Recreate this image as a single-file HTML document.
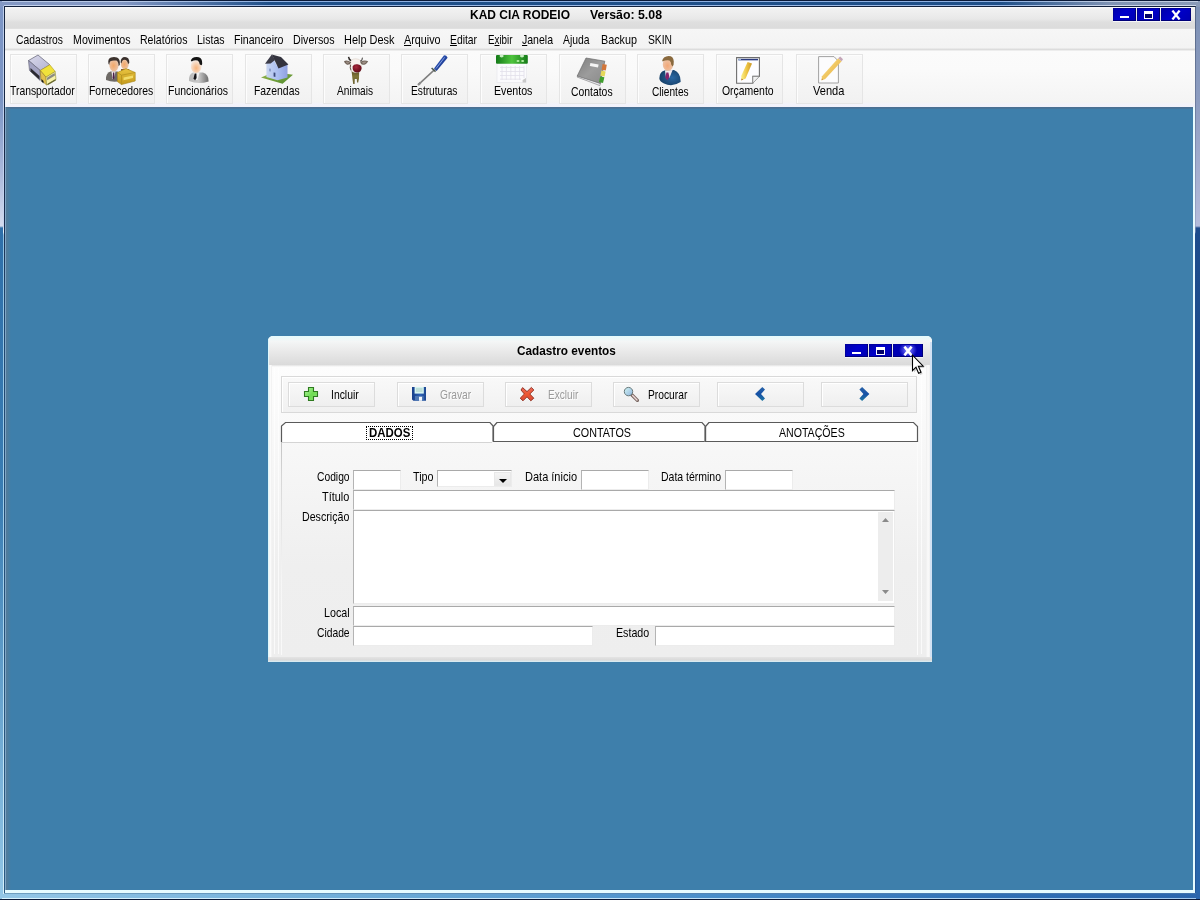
<!DOCTYPE html>
<html lang="pt">
<head>
<meta charset="utf-8">
<title>KAD CIA RODEIO</title>
<style>
html,body{margin:0;padding:0;}
body{width:1200px;height:900px;overflow:hidden;position:relative;background:#3e7fab;font-family:"Liberation Sans",sans-serif;font-size:13px;}
div,span,svg{position:absolute;box-sizing:border-box;}
#txt{left:0;top:0;width:1200px;height:900px;will-change:transform;}
.t{white-space:pre;line-height:16px;height:16px;transform-origin:0 50%;font-family:"Liberation Sans",sans-serif;}
.t u{text-decoration:underline;text-underline-offset:1px;}
/* main frame */
#frameTop{left:0;top:0;width:1200px;height:7px;}
#frameL{left:0;top:0;width:5px;height:900px;}
#frameR{left:1195px;top:0;width:5px;height:900px;}
#frameB{left:0;top:893px;width:1200px;height:7px;}
#titlebar{left:5px;top:7px;width:1190px;height:22px;background:linear-gradient(#fbfbfb 0,#f1f1f1 2px,#ececec 8px,#e8e8e8 12px,#dfdfdf 15px,#dcdcdc 21px,#e4e4e4 22px);}
#menubar{left:5px;top:29px;width:1190px;height:21px;background:linear-gradient(#f6f6f6 0,#f3f3f3 19px,#dedede 20px,#dadada 21px);}
#toolbar{left:5px;top:50px;width:1190px;height:57px;background:linear-gradient(#e6e6e6 0,#fbfbfb 1.5px,#fafafa 20px,#f4f4f4 52px,#f3f3fa 54px,#f1f1fb 57px);}
.tb{width:67px;height:50px;top:54px;border:1px solid #e5e5e5;background:linear-gradient(#f9f9f9,#f1f1f1);box-shadow:inset 1px 1px 0 #fdfdfd;}
.cb{top:8px;height:13px;background:linear-gradient(135deg,#0000a6 0%,#0000cc 45%,#0000b0 100%);box-shadow:inset -1px -1px 0 #000078,inset 1px 1px 0 #0000a0;}
/* mdi */
#mdi{left:5px;top:107px;width:1190px;height:786px;background:#3e7fab;}
/* dialog */
#dlg{left:268px;top:336px;width:664px;height:326px;border-radius:5px 5px 0 0;background:#f0f0f0;overflow:hidden;}
#dlgTitle{left:0;top:0;width:664px;height:29px;background:linear-gradient(#e4fbfd 0%,#f4f6f6 18%,#ececec 45%,#e2e2e2 75%,#dadada 100%);}
.btn{top:382px;width:87px;height:25px;border:1px solid #dcdcdc;background:linear-gradient(#f8f8f8,#efefef);box-shadow:inset 1px 1px 0 #fff;}
.inp{background:#fff;border-top:1px solid #a9a9a9;border-left:1px solid #b4b4b4;border-right:1px solid #ececec;border-bottom:1px solid #ececec;}
</style>
</head>
<body>
<!-- MDI client -->
<div id="mdi"></div>
<div style="left:5px;top:107px;width:1188px;height:2px;background:linear-gradient(#4c6e90,#44769e);"></div>
<div style="left:6px;top:108px;width:5px;height:782px;background:linear-gradient(90deg,rgba(86,122,150,.9),rgba(62,127,171,0));"></div>

<!-- main window chrome -->
<div id="titlebar"></div>
<div id="menubar"></div>
<div id="toolbar"></div>

<!-- title + menu text -->

















<!-- main window control buttons -->
<div class="cb" style="left:1113px;width:23px;"><div style="left:7px;top:8px;width:9px;height:2px;background:#fff;"></div></div>
<div class="cb" style="left:1137px;width:23px;"><div style="left:7px;top:3px;width:9px;height:8px;border:1px solid #fff;border-top-width:3px;background:#00006a;"></div></div>
<div class="cb" style="left:1161px;width:30px;"><svg width="10" height="10" viewBox="0 0 10 10" style="left:10px;top:1.5px;"><path d="M1.4 0.6 L8.6 9.4 M8.6 0.6 L1.4 9.4" stroke="#fff" stroke-width="2.3"/></svg></div>
<div style="left:1113px;top:21px;width:78px;height:1px;background:#fbfbff;opacity:.8;"></div>
<!-- main toolbar buttons -->
<div class="tb" style="left:10px;"></div><svg width="32" height="34" viewBox="26 53 32 34" style="left:26px;top:53px;">
<defs><linearGradient id="trA" x1="0" y1="0" x2="1" y2="1"><stop offset="0" stop-color="#d9d9ea"/><stop offset="1" stop-color="#b4b4d4"/></linearGradient></defs>
<path d="M28.5 60.5 L38 55 L49.8 64.8 L40.2 70.5 Z" fill="url(#trA)" stroke="#6f6f80" stroke-width=".8"/>
<path d="M28.5 60.5 L40.2 70.5 L40.2 80.5 L29.5 70.5 Z" fill="#a3a3c2" stroke="#6a6a7c" stroke-width=".7"/>
<path d="M30.5 71.5 L39.5 79.8 L39.5 76 L30.5 68 Z" fill="#2a2a30"/>
<path d="M40.2 70.5 L49.8 64.8 L55.2 71.5 L46 77.2 Z" fill="#f0e23a" stroke="#b09a20" stroke-width=".6"/>
<path d="M40.2 70.5 L46 77.2 L46.6 85 L41 80 Z" fill="#e2c14e" stroke="#8f7a20" stroke-width=".6"/>
<path d="M46 77.2 L55.2 71.5 L56 79.5 L46.6 85 Z" fill="#f6f1a8" stroke="#8f8a30" stroke-width=".6"/>
<path d="M47 77.8 L54.6 73 L55 75.6 L47.2 80.3 Z" fill="#8b8b84"/>
<path d="M41.5 79 L43.5 81 L43.5 83.4 L41.5 81.5 Z" fill="#1a1a1a"/>
<path d="M47.5 83.8 L55.6 79 L55.8 80.6 L47.6 85.2 Z" fill="#6a6a30"/>
</svg>

<div class="tb" style="left:88px;"></div><svg width="33" height="32" viewBox="104 55 33 32" style="left:104px;top:55px;">
<defs><radialGradient id="fcA" cx=".45" cy=".55" r=".6"><stop offset="0" stop-color="#f3a868"/><stop offset="1" stop-color="#e9c9b4"/></radialGradient>
<linearGradient id="fcB" x1="0" y1="0" x2="0" y2="1"><stop offset="0" stop-color="#e9c440"/><stop offset="1" stop-color="#c49a1c"/></linearGradient></defs>
<ellipse cx="124.8" cy="64" rx="4" ry="5.4" fill="url(#fcA)"/>
<path d="M120.6 62.5 Q120.6 57 125 57 Q129.6 57 129.3 63 L128 64 Q127.6 60 124.5 59.8 Q121.8 60 121.5 63.5 Z" fill="#3a302c"/>
<path d="M121 69 L129 69 L131 74 L121 74 Z" fill="#8a5a30"/>
<path d="M106 80 Q105.5 73 110.5 71.5 L117.5 71.5 Q121 73 120.5 81 Q113 83 106 80 Z" fill="#6e6a66"/>
<path d="M111.5 71.5 L115.5 71.5 L114 79 L112.6 79 Z" fill="#f4eeee"/>
<path d="M113 72.5 L114.3 72.5 L114.6 78 L113.4 79.5 L112.6 78 Z" fill="#4a1f4a"/>
<ellipse cx="114" cy="65" rx="4.7" ry="6.4" fill="url(#fcA)"/>
<path d="M108.4 63.5 Q107.6 58.6 111 57.6 Q114 56.4 117 57.6 Q120.4 59 119.8 65 L118.6 66 Q118.6 61.8 116.4 60.6 Q112.5 60 110.4 61.2 Q109.4 62.2 109.2 65 Z" fill="#3c322e"/>
<path d="M117.4 72.5 L126 68.6 L135.2 72.5 L135.2 81 L121.5 84.6 L117.4 81.6 Z" fill="url(#fcB)" stroke="#a58418" stroke-width=".6"/>
<path d="M117.4 72.5 L121.5 75.2 L135.2 72.5 M121.5 75.2 L121.5 84.6" fill="none" stroke="#b08e1c" stroke-width=".7"/>
<path d="M123.5 77.6 L133 75.6 L133 78 L123.5 80.2 Z" fill="#f2dc6a"/>
</svg>

<div class="tb" style="left:166px;"></div><svg width="24" height="30" viewBox="187 55 24 30" style="left:187px;top:55px;">
<defs><radialGradient id="fuA" cx=".5" cy=".65" r=".6"><stop offset="0" stop-color="#f8b47c"/><stop offset=".8" stop-color="#f5e1d2"/><stop offset="1" stop-color="#f4f0ec"/></radialGradient>
<linearGradient id="fuB" x1="0" y1="0" x2="1" y2="0"><stop offset="0" stop-color="#b9b9b9"/><stop offset=".5" stop-color="#c9c9c9"/><stop offset="1" stop-color="#6c6c6c"/></linearGradient></defs>
<path d="M189 81 Q188.5 74.5 193 72.6 L203 72.6 Q208.8 74.5 208.6 81.5 Q198 84.8 189 81 Z" fill="url(#fuB)"/>
<path d="M193.6 72.6 L199.5 72.6 L197.5 80 L194.6 80 Z" fill="#f2f2f2"/>
<path d="M194.6 73.6 L196.4 73.6 L196.6 78 L195 80.6 L193.6 78.2 Z" fill="#16161a"/>
<ellipse cx="196.2" cy="66" rx="5.4" ry="7" fill="url(#fuA)"/>
<path d="M190.8 60.6 Q191.6 57.4 196.5 57 Q201.2 56.8 202 61 Q202.6 64.4 201.6 65.2 L199.8 64.4 Q199.4 61.4 197.6 60.4 Q194.6 59.6 191.6 61.4 Z" fill="#151515"/>
</svg>

<div class="tb" style="left:245px;"></div><svg width="36" height="33" viewBox="259 53 36 33" style="left:259px;top:53px;">
<defs><linearGradient id="hzA" x1="0" y1="0" x2="1" y2="0"><stop offset="0" stop-color="#c9d6f2"/><stop offset=".55" stop-color="#a9bdf0"/><stop offset="1" stop-color="#8fa0e0"/></linearGradient>
<linearGradient id="hzB" x1="0" y1="0" x2="1" y2="1"><stop offset="0" stop-color="#9ab84e"/><stop offset="1" stop-color="#4f8a2c"/></linearGradient></defs>
<path d="M261 77.6 L274 72 L293 74.8 L282.6 83.8 Z" fill="url(#hzB)"/>
<path d="M266.4 62.5 L272 56 L277 66 L287.5 63.5 L287.5 77.5 L277.5 80.2 L266.4 77 Z" fill="url(#hzA)"/>
<path d="M265 63.8 L271.8 54.4 L275 60 L270.6 63.5 Z" fill="#3c3c48"/>
<path d="M271.8 54.4 L281 57 L288.4 64.6 L278.5 68.6 Z" fill="#33333e"/>
<path d="M273.6 72.5 L275.4 72.8 L275.4 77 L273.6 76.6 Z" fill="#3c4a7a"/>
<path d="M269 68.5 L271 68.8 L271 71.6 L269 71.3 Z" fill="#8ea0cc"/>
</svg>

<div class="tb" style="left:323px;"></div><svg width="28" height="30" viewBox="342 55 28 30" style="left:342px;top:55px;">
<defs><radialGradient id="cwA" cx=".4" cy=".35" r=".7"><stop offset="0" stop-color="#a8283a"/><stop offset=".6" stop-color="#7a1222"/><stop offset="1" stop-color="#5a0c18"/></radialGradient>
<linearGradient id="cwB" x1="0" y1="0" x2="0" y2="1"><stop offset="0" stop-color="#5e5228"/><stop offset=".4" stop-color="#7e7436"/><stop offset="1" stop-color="#6a6030"/></linearGradient></defs>
<path d="M351.6 71 L359.2 71 L359 78.6 L358.2 82.6 L357 82.6 L356.8 79 L354.8 79 L354.6 84 L353.2 84 L352.4 78.6 Z" fill="url(#cwB)"/>
<path d="M350 63 Q350.4 59 355.6 58.8 Q361 59 361.6 63 L361.6 69 Q360.4 72.6 356 72.6 Q351 72.4 350 68.6 Z" fill="#f7f1ec" stroke="#dcd2ca" stroke-width=".6"/>
<path d="M344 61.2 Q347 59.6 351.2 62.2 Q350 65.2 347 64.8 Q344.6 63.8 344 61.2 Z" fill="#6e6056"/>
<path d="M345.6 61.8 Q347.6 61.2 349.8 62.6 Q348.4 64 346.8 63.6 Z" fill="#9a8c82"/>
<path d="M360.2 62 Q364 59.6 368.2 61.2 Q366.2 65 362.6 64.8 Q360.6 64 360.2 62 Z" fill="#74685e"/>
<path d="M362 62.4 Q364.4 61 366.6 61.8 Q365.2 63.8 363 63.8 Z" fill="#a09288"/>
<path d="M347.8 57 Q348.2 60.2 350.6 61.2 L351.4 60 Q349.8 59 349.2 56.8 Z" fill="#2e2a28"/>
<path d="M362 57.6 Q362 60 360 60.8 L360.6 61.8 Q363 60.8 362.8 57.8 Z" fill="#2e2a28"/>
<path d="M352.6 66.4 Q353.6 63.8 357.4 64.2 Q361.6 64.8 361.6 68.2 Q361.2 72.4 356.8 72.4 Q352.2 72 352.6 66.4 Z" fill="url(#cwA)"/>
<path d="M350.6 64.6 Q349.8 67.6 351 70.4" stroke="#6a5a50" stroke-width="1" fill="none"/>
</svg>

<div class="tb" style="left:401px;"></div><svg width="34" height="34" viewBox="416 53 34 34" style="left:416px;top:53px;">
<defs><linearGradient id="sdA" x1="0" y1="0" x2="1" y2="1"><stop offset="0" stop-color="#6f92dc"/><stop offset=".45" stop-color="#2448a6"/><stop offset="1" stop-color="#16286e"/></linearGradient></defs>
<path d="M418.4 84.6 L434.6 69.6" stroke="#7e7e7e" stroke-width="1.5"/>
<path d="M418 85 L420.6 82.6" stroke="#8e8e8e" stroke-width="2.2"/>
<path d="M431.6 68 L435.6 71.6" stroke="#4a5850" stroke-width="1.6"/>
<path d="M434 68.6 L443.8 55.4 Q446.4 55 447.6 57.8 L436.6 71 Z" fill="url(#sdA)"/>
<path d="M436 68.6 L444.6 57.4" stroke="#9db6ee" stroke-width=".8"/>
</svg>

<div class="tb" style="left:480px;"></div><svg width="34" height="32" viewBox="495 53 34 32" style="left:495px;top:53px;">
<defs><linearGradient id="clA" x1="0" y1="0" x2="1" y2="0"><stop offset="0" stop-color="#147a18"/><stop offset=".5" stop-color="#4fc43e"/><stop offset="1" stop-color="#157a18"/></linearGradient></defs>
<rect x="497" y="63" width="29.6" height="19.6" fill="#fbfbfd" stroke="#e4e4ea" stroke-width=".6"/>
<path d="M500 67.5 H524 M500 71.5 H524 M500 75.5 H524 M500 79.2 H521 M502 66 V80 M506.4 66 V80 M510.8 66 V80 M515.2 66 V80 M519.6 66 V80 M524 66 V78" stroke="#e2e0ea" stroke-width=".8" fill="none"/>
<rect x="496" y="55" width="31.8" height="8.8" rx="1" fill="url(#clA)"/>
<ellipse cx="501.6" cy="56" rx="2" ry="1.4" fill="#c9efc4"/>
<ellipse cx="522" cy="56" rx="2" ry="1.4" fill="#c9efc4"/>
<ellipse cx="518" cy="61" rx="1.5" ry="1.1" fill="#b4f0a4"/>
<ellipse cx="522.6" cy="61" rx="1.5" ry="1.1" fill="#b4f0a4"/>
<path d="M522.6 80 L526 78 L526 82.6 L522.6 82.6 Z" fill="#c9c9c9"/>
</svg>

<div class="tb" style="left:559px;"></div><svg width="34" height="31" viewBox="575 56 34 31" style="left:575px;top:56px;">
<defs><linearGradient id="bkA" x1="0" y1="0" x2="1" y2="1"><stop offset="0" stop-color="#7e7e7e"/><stop offset=".5" stop-color="#9c9c9c"/><stop offset="1" stop-color="#8a8a8a"/></linearGradient></defs>
<path d="M577 77 L599.8 85.6 L601.4 81 L578.6 74.5 Z" fill="#e9e9ee" stroke="#777" stroke-width=".6"/>
<path d="M586 58 L604.8 61.2 L600.2 83.4 L577.2 76 Z" fill="url(#bkA)" stroke="#6a6a6a" stroke-width=".7"/>
<path d="M590.4 63 L598.6 64.6 L598 67.6 L589.8 66 Z" fill="#f4f4f4"/>
<path d="M602.6 64 L606.8 64.8 L605.8 70.6 L601.6 69.8 Z" fill="#d2763a"/>
<path d="M601.4 70.6 L605.6 71.4 L604.6 76.6 L600.4 75.8 Z" fill="#e4d85a"/>
<path d="M600.2 76.4 L604.4 77.2 L603 83 L599 82 Z" fill="#3f9e2e"/>
</svg>

<div class="tb" style="left:637px;"></div><svg width="26" height="33" viewBox="657 54 26 33" style="left:657px;top:54px;">
<defs><radialGradient id="cliA" cx=".45" cy=".6" r=".6"><stop offset="0" stop-color="#f2a878"/><stop offset="1" stop-color="#edc8ae"/></radialGradient>
<radialGradient id="cliB" cx=".6" cy=".5" r=".7"><stop offset="0" stop-color="#2a68a4"/><stop offset="1" stop-color="#143a5e"/></radialGradient></defs>
<path d="M659.4 79 Q659 72 664.4 70.4 L674 70 Q681 73 680.6 82 Q672 87.6 664 83.4 Q660 81.6 659.4 79 Z" fill="url(#cliB)"/>
<path d="M665 70.4 L672.6 70 L669.6 77.4 L666 78.4 Z" fill="#f1eaf0"/>
<path d="M666.4 72.6 L668.4 72.4 L669.4 77 L667.4 80.6 L665.2 77.6 Z" fill="#86246a"/>
<ellipse cx="668" cy="64.4" rx="5.2" ry="6.4" fill="url(#cliA)"/>
<path d="M662.2 60.6 Q663.4 56.4 668.6 56 Q673.4 56 673.8 61.4 Q674 65.4 672.4 66.6 L671.2 64.6 Q671.4 61.6 669.4 60.4 Q665.6 59.8 662.6 61.6 Z" fill="#8a6a3e"/>
</svg>

<div class="tb" style="left:716px;"></div><svg width="28" height="31" viewBox="734 55 28 31" style="left:734px;top:55px;">
<defs><linearGradient id="orA" x1="0" y1="0" x2="1" y2="0"><stop offset="0" stop-color="#fbf08a"/><stop offset=".5" stop-color="#eec544"/><stop offset="1" stop-color="#c99628"/></linearGradient></defs>
<path d="M736.6 57.6 L759.4 57.6 L759.4 76.4 L752.8 76.4 L752.8 83.2 L736.6 83.2 Z" fill="#fdfdff" stroke="#6e6e6e" stroke-width="1.1"/>
<path d="M752.8 76.4 L759.4 76.4 L752.8 83.2 Z" fill="#f1f1f1" stroke="#8a8a8a" stroke-width=".8"/>
<path d="M738.4 59.6 H758" stroke="#2c3c80" stroke-width="1.5"/>
<path d="M738.4 59.6 H741" stroke="#9ab4d8" stroke-width="1.5"/>
<path d="M747.6 62 L752 63.6 L745.6 78.4 L741.4 80.6 L741.2 76 Z" fill="url(#orA)"/>
<path d="M741.4 80.6 L741.5 78.6 L743 79.6 Z" fill="#a05a28"/>
</svg>

<div class="tb" style="left:796px;"></div><svg width="28" height="32" viewBox="816 54 28 32" style="left:816px;top:54px;">
<defs><linearGradient id="vdA" x1="0" y1="0" x2="1" y2="1"><stop offset="0" stop-color="#fbe9a0"/><stop offset=".5" stop-color="#f0c660"/><stop offset="1" stop-color="#e7ae52"/></linearGradient></defs>
<path d="M818.6 56.6 L834 56.6 L838.4 61.2 L838.4 83 L818.6 83 Z" fill="#fcfcfd" stroke="#a2a2a2" stroke-width="1"/>
<path d="M838.2 58.2 L841.6 61.2 L825.2 79 L821.4 80.4 L822 76.2 Z" fill="url(#vdA)"/>
<path d="M838.2 58.2 L840.2 56.4 L843 59.2 L841.6 61.2 Z" fill="#c4a6b8"/>
<path d="M821.6 80 L822 78.4 L823 79.4 Z" fill="#b07a4a"/>
</svg>


<!-- window frame (aero glass) -->
<div id="frameL" style="background:linear-gradient(180deg,#7d96c6 0px,#7a94c4 100px,#a9b7da 170px,#d4dbee 226px,#2f6fa9 228px,#3a7db3 500px,#7fb6db 800px,#93c6e6 900px);"></div>
<div id="frameR" style="background:linear-gradient(180deg,#7c90b4 0px,#8c9cc0 100px,#b3bcdb 226px,#1d4c8c 228px,#1f5596 600px,#2a68ad 900px);"></div>
<div id="frameTop" style="background:linear-gradient(90deg,#8398c4 0px,#8398c4 120px,#1f4f88 270px,#1f4f88 1000px,#7f93b4 1110px,#8a9bb8 1200px);"></div>
<div id="frameB" style="background:linear-gradient(90deg,#93c6e6 0px,#6aa9d6 400px,#4a8fca 700px,#2f6fb5 1000px,#2a66ad 1200px);"></div>
<!-- frame lines: top -->
<div style="left:0;top:0;width:1200px;height:1px;background:#0b1a38;"></div>
<div style="left:2px;top:1px;width:1196px;height:1px;background:linear-gradient(90deg,#b9c9e6 0,#b9c9e6 120px,#8fb0e0 270px,#8fb0e0 1000px,#c0cce0 1110px);"></div>
<div style="left:4px;top:5px;width:1192px;height:1px;background:linear-gradient(90deg,#c4d3ee 0,#c4d3ee 120px,#9ab8e5 270px,#9ab8e5 1000px,#cdd7ea 1110px);"></div>
<div style="left:4px;top:6px;width:1192px;height:1px;background:#12213d;"></div>
<!-- left -->
<div style="left:3px;top:6px;width:1px;height:888px;background:linear-gradient(180deg,#bccdea 0,#c6d4ee 220px,#e8f4fb 226px,#8fc0e0 229px,#a6d2ec 600px,#d9f1fb 900px);"></div>
<div style="left:4px;top:6px;width:1px;height:888px;background:linear-gradient(180deg,#14233f 0,#1b2e4f 220px,#1f456e 300px,#2a5a82 900px);"></div>
<div style="left:5px;top:107px;width:1px;height:783px;background:#7fa6c6;"></div>
<!-- right -->
<div style="left:1192.5px;top:107px;width:2.5px;height:786px;background:#e6fbff;"></div>
<div style="left:1195px;top:6px;width:1px;height:888px;background:linear-gradient(180deg,#3b4a66 0,#59688a 100px,#8e9bbd 226px,#1d4c8c 228px);opacity:.6;"></div>
<!-- bottom -->
<div style="left:5px;top:890px;width:1190px;height:3px;background:#e6fbff;"></div>
<div style="left:4px;top:893px;width:1192px;height:1px;background:linear-gradient(90deg,#6f9fc0,#3f74ae);"></div>
<div style="left:2px;top:898px;width:1194px;height:1px;background:linear-gradient(90deg,#d9f4ff,#bfe0f6 800px,#9fc8ee);"></div>
<div style="left:0;top:899px;width:1200px;height:1px;background:#0b1a38;"></div>

<!-- child dialog: Cadastro eventos -->
<div id="dlg">
  <div id="dlgTitle"></div>
  <!-- borders -->
  <div style="left:0;top:0;width:1px;height:326px;background:#dff8fc;"></div>
  <div style="left:1px;top:29px;width:3px;height:293px;background:linear-gradient(90deg,#f1f3f3,#fbfbfb,#efefef);"></div>
  <div style="left:658px;top:29px;width:4px;height:292px;background:linear-gradient(90deg,#efefef,#fbfbfb,#f1f1f1);"></div>
  <div style="left:662px;top:6px;width:2px;height:320px;background:#d2e2f4;"></div>
  <!-- client -->
  <div style="left:4px;top:29px;width:654px;height:292px;background:linear-gradient(#e2e2e2 0,#fdfdfd 2px,#f9f9f9 60px,#f4f4f4 130px,#efefef 200px,#eeeeee 100%);"></div>
  <div style="left:6px;top:32px;width:1px;height:286px;background:#fff;opacity:.7;"></div>
  <div style="left:10px;top:32px;width:1px;height:286px;background:#fff;opacity:.7;"></div>
  <div style="left:653px;top:32px;width:1px;height:286px;background:#fff;opacity:.7;"></div>
  <div style="left:0;top:321px;width:664px;height:5px;background:linear-gradient(#e4e4e4 0,#d9d9d9 60%,#d8f0f8 100%);"></div>
</div>
<!-- dialog toolbar panel -->
<div style="left:281px;top:376px;width:636px;height:37px;border:1px solid #d9d9d9;background:linear-gradient(#f9f9f9,#f1f1f1);box-shadow:inset 1px 1px 0 #fff;"></div>
<div class="btn" style="left:288px;"></div>
<div class="btn" style="left:397px;"></div>
<div class="btn" style="left:505px;"></div>
<div class="btn" style="left:613px;"></div>
<div class="btn" style="left:717px;"></div>
<div class="btn" style="left:821px;"></div>
<svg width="16" height="16" viewBox="303 386 16 16" style="left:303px;top:386px;">
<defs><linearGradient id="plA" x1="0" y1="0" x2="1" y2="1"><stop offset="0" stop-color="#b2f5a2"/><stop offset=".55" stop-color="#6fdc52"/><stop offset="1" stop-color="#8ee07a"/></linearGradient></defs>
<path d="M308.5 387.5 H313.5 V391.5 H317.5 V396.5 H313.5 V400.5 H308.5 V396.5 H304.5 V391.5 H308.5 Z" fill="url(#plA)" stroke="#2f7a20" stroke-width="1.1"/></svg><svg width="16" height="16" viewBox="411 386 16 16" style="left:411px;top:386px;">
<defs><linearGradient id="flA" x1="0" y1="0" x2="1" y2="0"><stop offset="0" stop-color="#173f8a"/><stop offset=".6" stop-color="#2f62b6"/><stop offset="1" stop-color="#1c468f"/></linearGradient></defs>
<path d="M412 387 H426 V400.8 H413.4 L412 399.6 Z" fill="url(#flA)"/>
<rect x="414.6" y="387" width="9.2" height="6.6" fill="#d6f4f0"/>
<path d="M416 389 H422.6 M416 391 H422.6" stroke="#8fb6b0" stroke-width=".7"/>
<rect x="415" y="396" width="8.6" height="4.8" fill="#4f78b4"/>
<rect x="419" y="396.8" width="3" height="4" fill="#f2f6fc"/></svg><svg width="16" height="16" viewBox="519 386 16 16" style="left:519px;top:386px;">
<defs><linearGradient id="rxA" x1="0" y1="0" x2="0" y2="1"><stop offset="0" stop-color="#e86a60"/><stop offset=".5" stop-color="#ee5630"/><stop offset="1" stop-color="#d64a3a"/></linearGradient></defs>
<path d="M522.6 387.6 L527 391.6 L531.4 387.4 L533.8 390 L529.8 394 L533.8 398.2 L530.8 400.8 L527 396.8 L523 400.8 L520.2 398.2 L524.4 394 L521 390 Z" fill="url(#rxA)" stroke="#8e2c1c" stroke-width=".9" stroke-linejoin="round"/></svg><svg width="16" height="16" viewBox="623 386 16 16" style="left:623px;top:386px;">
<defs><linearGradient id="mgA" x1="0" y1="0" x2="1" y2="1"><stop offset="0" stop-color="#d2f6f4"/><stop offset="1" stop-color="#8fb2dc"/></linearGradient></defs>
<path d="M632 395 L637.4 400.4" stroke="#7a6862" stroke-width="3.4" stroke-linecap="round"/>
<path d="M632.6 395.6 L637 400" stroke="#ecd8d8" stroke-width="1.4" stroke-linecap="round"/>
<circle cx="628.5" cy="391.6" r="4.2" fill="url(#mgA)" stroke="#66787a" stroke-width="1"/></svg><svg width="12" height="16" viewBox="754 386 12 16" style="left:754px;top:386px;">
<defs><linearGradient id="chA" x1="0" y1="0" x2="0" y2="1"><stop offset="0" stop-color="#2a64a8"/><stop offset=".5" stop-color="#1650a6"/><stop offset="1" stop-color="#1f78a2"/></linearGradient></defs>
<path d="M755 394 L762.3 387 L765 389.6 L761 394 L765 398.4 L762.3 401 Z" fill="url(#chA)"/></svg><svg width="12" height="16" viewBox="858 386 12 16" style="left:858px;top:386px;">
<path d="M869.4 394 L862.1 387 L859.4 389.6 L863.4 394 L859.4 398.4 L862.1 401 Z" fill="url(#chA)"/></svg>




<!-- dialog title text & buttons -->

<div class="cb" style="left:845px;top:344px;width:23px;"><div style="left:7px;top:8px;width:9px;height:2px;background:#fff;"></div></div>
<div class="cb" style="left:869px;top:344px;width:23px;"><div style="left:7px;top:3px;width:9px;height:8px;border:1px solid #fff;border-top-width:3px;background:#00006a;"></div></div>
<div class="cb" style="left:893px;top:344px;width:30px;background:radial-gradient(ellipse 9px 8px at 15px 6px,#8c8cff 0,#4a4ae6 45%,#0000b4 100%);"><svg width="10" height="10" viewBox="0 0 10 10" style="left:10px;top:1.5px;"><path d="M1.4 0.6 L8.6 9.4 M8.6 0.6 L1.4 9.4" stroke="#fff" stroke-width="2.5"/></svg></div>
<div style="left:845px;top:357px;width:78px;height:1px;background:#fbfbff;opacity:.7;"></div>
<!-- tab page -->
<div style="left:281px;top:442px;width:1px;height:213px;background:linear-gradient(#c4c4c4 0,#d8d8d8 40px,#f6f6f6 140px,#f9f9f9 100%);"></div>
<div style="left:917px;top:442px;width:1px;height:213px;background:#fbfbfb;"></div>
<!-- tabs -->
<svg width="640" height="24" viewBox="0 0 640 24" style="left:280px;top:420px;">
  <path d="M1.5 22 L1.5 6 L5.5 2.5 L210 2.5 L213.5 6.5 L213.5 22 Z" fill="#fff"/>
  <path d="M213.5 21.5 L213.5 6.5 L217 2.5 L422 2.5 L425.5 6.5 L425.5 21.5 Z" fill="#fff"/>
  <path d="M425.5 21.5 L425.5 6.5 L429 2.5 L633.5 2.5 L637.5 6.5 L637.5 21.5 Z" fill="#fff"/>
  <path d="M1.5 22 L1.5 6 L5.5 2.5 L210 2.5 L213.5 6.5" fill="none" stroke="#5a5a5a" stroke-width="1.2"/>
  <path d="M217 2.5 L213.5 6.5 L213.5 21.5 L425.5 21.5 L425.5 6.5 L422 2.5 Z" fill="none" stroke="#5a5a5a" stroke-width="1.2"/>
  <path d="M212.5 6 L212.5 21.5" stroke="#9a9a9a" stroke-width="1"/>
  <path d="M429 2.5 L425.5 6.5 L425.5 21.5 L637.5 21.5 L637.5 6.5 L633.5 2.5 Z" fill="none" stroke="#5a5a5a" stroke-width="1.2"/>
  <path d="M424.5 6 L424.5 21.5" stroke="#9a9a9a" stroke-width="1"/>
  <path d="M2 22.5 L212 22.5" stroke="#d4d4d4" stroke-width="1"/>
</svg>

<div style="left:366px;top:426px;width:47px;height:14px;border:1px dotted #000;"></div>


<!-- form labels -->









<!-- form inputs -->
<div class="inp" style="left:353px;top:470px;width:48px;height:20px;"></div>
<div class="inp" style="left:437px;top:470px;width:75px;height:17px;"></div>
<div style="left:494px;top:472px;width:17px;height:14px;background:linear-gradient(#f4f4f4,#e6e6e6);border:1px solid #e8e8e8;"><svg width="8" height="4" viewBox="0 0 8 4" style="left:3.5px;top:5.5px;"><path d="M0 0 L8 0 L4 4 Z" fill="#000"/></svg></div>
<div class="inp" style="left:581px;top:470px;width:68px;height:20px;"></div>
<div class="inp" style="left:725px;top:470px;width:68px;height:20px;"></div>
<div class="inp" style="left:353px;top:490px;width:542px;height:20px;"></div>
<div class="inp" style="left:353px;top:510px;width:542px;height:94px;"></div>
<div style="left:878px;top:512px;width:15px;height:89px;background:#ededed;">
  <svg width="7" height="4" viewBox="0 0 7 4" style="left:4px;top:6px;"><path d="M0 4 L7 4 L3.5 0 Z" fill="#8a8a8a"/></svg>
  <svg width="7" height="4" viewBox="0 0 7 4" style="left:4px;top:78px;"><path d="M0 0 L7 0 L3.5 4 Z" fill="#8a8a8a"/></svg>
</div>
<div class="inp" style="left:353px;top:606px;width:542px;height:20px;"></div>
<div class="inp" style="left:353px;top:626px;width:240px;height:20px;"></div>
<div class="inp" style="left:655px;top:626px;width:240px;height:20px;"></div>
<div id="txt">
<span class="t" style="left:469.5px;top:7px;font-size:13px;color:#000;transform:scaleX(0.9210);font-weight:bold;">KAD CIA RODEIO</span>
<span class="t" style="left:590px;top:7px;font-size:13px;color:#000;transform:scaleX(0.9487);font-weight:bold;">Versão: 5.08</span>
<span class="t" style="left:16px;top:32px;font-size:13px;color:#000;transform:scaleX(0.7932);">Cadastros</span>
<span class="t" style="left:73px;top:32px;font-size:13px;color:#000;transform:scaleX(0.8205);">Movimentos</span>
<span class="t" style="left:140px;top:32px;font-size:13px;color:#000;transform:scaleX(0.8115);">Relatórios</span>
<span class="t" style="left:197px;top:32px;font-size:13px;color:#000;transform:scaleX(0.8096);">Listas</span>
<span class="t" style="left:234px;top:32px;font-size:13px;color:#000;transform:scaleX(0.8154);">Financeiro</span>
<span class="t" style="left:293px;top:32px;font-size:13px;color:#000;transform:scaleX(0.8205);">Diversos</span>
<span class="t" style="left:344px;top:32px;font-size:13px;color:#000;transform:scaleX(0.8421);">Help Desk</span>
<span class="t" style="left:404px;top:32px;font-size:13px;color:#000;transform:scaleX(0.8281);"><u>A</u>rquivo</span>
<span class="t" style="left:450px;top:32px;font-size:13px;color:#000;transform:scaleX(0.7948);"><u>E</u>ditar</span>
<span class="t" style="left:487.5px;top:32px;font-size:13px;color:#000;transform:scaleX(0.7535);">E<u>x</u>ibir</span>
<span class="t" style="left:522px;top:32px;font-size:13px;color:#000;transform:scaleX(0.8091);"><u>J</u>anela</span>
<span class="t" style="left:563px;top:32px;font-size:13px;color:#000;transform:scaleX(0.7970);">Ajuda</span>
<span class="t" style="left:601px;top:32px;font-size:13px;color:#000;transform:scaleX(0.8300);">Backup</span>
<span class="t" style="left:647.5px;top:32px;font-size:13px;color:#000;transform:scaleX(0.7909);">SKIN</span>
<span class="t" style="left:10.3px;top:83px;font-size:13px;color:#000;transform:scaleX(0.7971);">Transportador</span>
<span class="t" style="left:88.7px;top:83px;font-size:13px;color:#000;transform:scaleX(0.8016);">Fornecedores</span>
<span class="t" style="left:168.4px;top:83px;font-size:13px;color:#000;transform:scaleX(0.8060);">Funcionários</span>
<span class="t" style="left:254.4px;top:83px;font-size:13px;color:#000;transform:scaleX(0.7987);">Fazendas</span>
<span class="t" style="left:337px;top:83px;font-size:13px;color:#000;transform:scaleX(0.7784);">Animais</span>
<span class="t" style="left:410.6px;top:83px;font-size:13px;color:#000;transform:scaleX(0.7831);">Estruturas</span>
<span class="t" style="left:493.6px;top:83px;font-size:13px;color:#000;transform:scaleX(0.8173);">Eventos</span>
<span class="t" style="left:571.4px;top:84px;font-size:13px;color:#000;transform:scaleX(0.7993);">Contatos</span>
<span class="t" style="left:652.4px;top:84px;font-size:13px;color:#000;transform:scaleX(0.7792);">Clientes</span>
<span class="t" style="left:722.4px;top:83px;font-size:13px;color:#000;transform:scaleX(0.8023);">Orçamento</span>
<span class="t" style="left:813px;top:83px;font-size:13px;color:#000;transform:scaleX(0.8515);">Venda</span>
<span class="t" style="left:331.3px;top:386.5px;font-size:13px;color:#000;transform:scaleX(0.7986);">Incluir</span>
<span class="t" style="left:439.8px;top:386.5px;font-size:13px;color:#9a9a9a;transform:scaleX(0.7852);text-shadow:1px 1px 0 #fff;">Gravar</span>
<span class="t" style="left:547.7px;top:386.5px;font-size:13px;color:#9a9a9a;transform:scaleX(0.7766);text-shadow:1px 1px 0 #fff;">Excluir</span>
<span class="t" style="left:647.5px;top:386.5px;font-size:13px;color:#000;transform:scaleX(0.7882);">Procurar</span>
<span class="t" style="left:516.7px;top:342.5px;font-size:13px;color:#000;transform:scaleX(0.9056);font-weight:bold;">Cadastro eventos</span>
<span class="t" style="left:368.7px;top:424.5px;font-size:13px;color:#000;transform:scaleX(0.8796);font-weight:bold;">DADOS</span>
<span class="t" style="left:572.5px;top:424.5px;font-size:13px;color:#000;transform:scaleX(0.8278);">CONTATOS</span>
<span class="t" style="left:778.8px;top:424.5px;font-size:13px;color:#000;transform:scaleX(0.8144);">ANOTAÇÕES</span>
<span class="t" style="left:316.7px;top:468.5px;font-size:13px;color:#000;transform:scaleX(0.7912);">Codigo</span>
<span class="t" style="left:413px;top:469px;font-size:13px;color:#000;transform:scaleX(0.8262);">Tipo</span>
<span class="t" style="left:525.3px;top:468.5px;font-size:13px;color:#000;transform:scaleX(0.8466);">Data ínicio</span>
<span class="t" style="left:661.3px;top:468.5px;font-size:13px;color:#000;transform:scaleX(0.8062);">Data término</span>
<span class="t" style="left:322px;top:488.5px;font-size:13px;color:#000;transform:scaleX(0.8396);">Título</span>
<span class="t" style="left:302px;top:508.5px;font-size:13px;color:#000;transform:scaleX(0.8184);">Descrição</span>
<span class="t" style="left:323.7px;top:604.5px;font-size:13px;color:#000;transform:scaleX(0.8237);">Local</span>
<span class="t" style="left:316.7px;top:624.5px;font-size:13px;color:#000;transform:scaleX(0.7912);">Cidade</span>
<span class="t" style="left:616.4px;top:624.5px;font-size:13px;color:#000;transform:scaleX(0.8201);">Estado</span>
</div>
<!-- mouse cursor -->
<svg width="16" height="24" viewBox="0 0 16 24" style="left:911px;top:354px;"><path d="M3 3 L3 18.4 L6.4 15 L9 21 L11.6 20 L9 14 L13.6 14 Z" fill="#000" opacity=".18"/><path d="M1.5 1.2 L1.5 16.6 L5 13.2 L7.6 19.2 L10 18.2 L7.4 12.2 L12.2 12.2 Z" fill="#fff" stroke="#000" stroke-width="1.1" stroke-linejoin="miter"/></svg>

</body>
</html>
